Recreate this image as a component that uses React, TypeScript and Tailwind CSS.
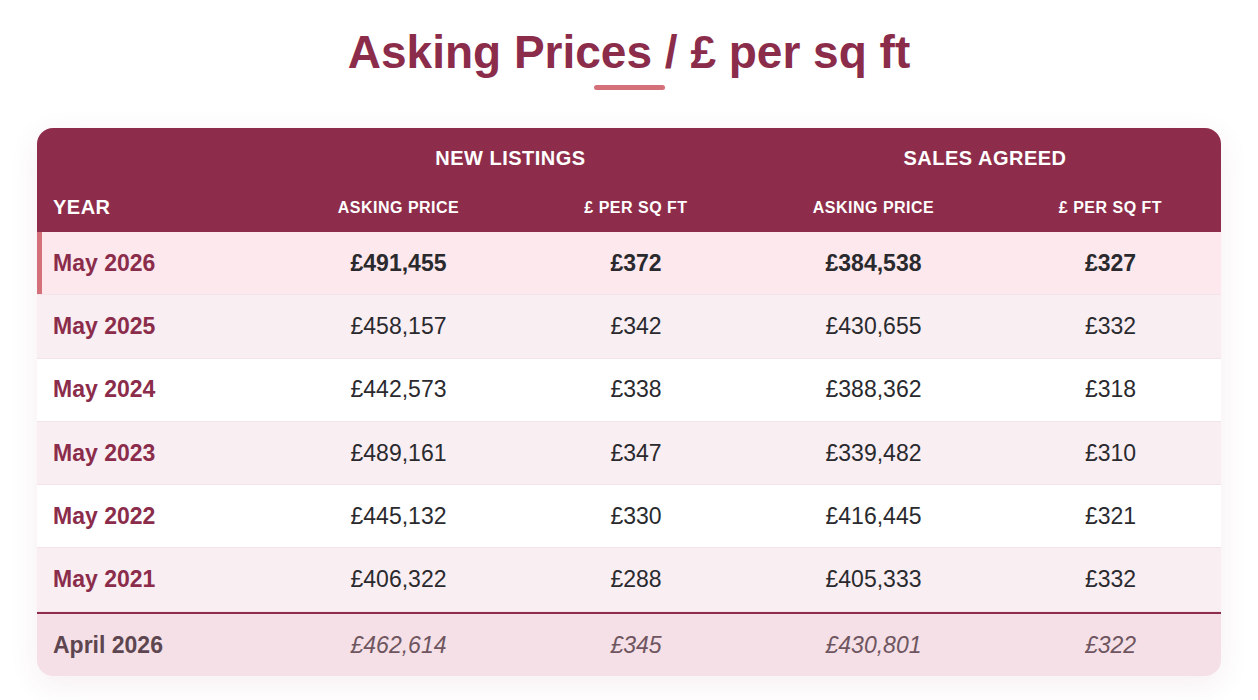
const rows = [
  { year: "May 2026", a: "£491,455", b: "£372", c: "£384,538", d: "£327", bg: "bg-[#fce8ed]", current: true },
  { year: "May 2025", a: "£458,157", b: "£342", c: "£430,655", d: "£332", bg: "bg-[#f9eef2]" },
  { year: "May 2024", a: "£442,573", b: "£338", c: "£388,362", d: "£318", bg: "bg-white" },
  { year: "May 2023", a: "£489,161", b: "£347", c: "£339,482", d: "£310", bg: "bg-[#f9eef2]" },
  { year: "May 2022", a: "£445,132", b: "£330", c: "£416,445", d: "£321", bg: "bg-white" },
  { year: "May 2021", a: "£406,322", b: "£288", c: "£405,333", d: "£332", bg: "bg-[#f9eef2]" },
];

const cols = "grid grid-cols-[243px_237px_238px_237px_1fr] items-center";

export default function App() {
  return (
    <div className="min-h-[700px] bg-white px-[37px] pt-[24px] font-['Liberation_Sans',Arial,sans-serif]">
      {/* Title */}
      <div className="flex flex-col items-center">
        <h1 className="text-[46px] font-bold leading-[56px] text-[#8b2c4b]">Asking Prices / £ per sq ft</h1>
        <div className="mt-[5px] h-[5px] w-[71px] rounded-full bg-[#d4707a]" />
      </div>

      {/* Table */}
      <div className="mt-[38px] overflow-hidden rounded-[16px] bg-white shadow-[0_8px_30px_rgba(139,44,75,0.08)]">
        {/* Header */}
        <div className="bg-[#8e2d4b] text-white">
          <div className={`${cols} h-[57px] pt-[3px]`}>
            <div />
            <div className="col-span-2 pr-[14px] text-center text-[20px] font-bold tracking-[0.5px]">NEW LISTINGS</div>
            <div className="col-span-2 pr-[6px] text-center text-[20px] font-bold tracking-[0.5px]">SALES AGREED</div>
          </div>
          <div className={`${cols} h-[47px] pb-[4px]`}>
            <div className="pl-[16px] text-[20px] font-bold tracking-[0.5px]">YEAR</div>
            <div className="pt-[3px] text-center text-[16px] font-bold tracking-[0.5px]">ASKING PRICE</div>
            <div className="pt-[3px] text-center text-[16px] font-bold tracking-[0.5px]">£ PER SQ FT</div>
            <div className="pt-[3px] text-center text-[16px] font-bold tracking-[0.5px]">ASKING PRICE</div>
            <div className="pl-[8px] pt-[3px] text-center text-[16px] font-bold tracking-[0.5px]">£ PER SQ FT</div>
          </div>
        </div>

        {/* Body */}
        {rows.map((r) => (
          <div
            key={r.year}
            className={`${cols} h-[63.3px] border-b border-[#f3e4e9] text-[23px] text-[#2a2a2e] ${r.bg} ${
              r.current ? "font-bold shadow-[inset_5px_0_0_#d4707a]" : ""
            }`}
          >
            <div className="pl-[16px] font-bold text-[#8b2c4b]">{r.year}</div>
            <div className="text-center">{r.a}</div>
            <div className="text-center">{r.b}</div>
            <div className="text-center">{r.c}</div>
            <div className="pl-[8px] text-center">{r.d}</div>
          </div>
        ))}

        {/* Previous month */}
        <div className={`${cols} h-[64px] border-t-2 border-[#8e2d4b] bg-[#f4e0e6] text-[23px] italic text-[#6e5560]`}>
          <div className="pl-[16px] font-bold not-italic text-[#5e4650]">April 2026</div>
          <div className="text-center">£462,614</div>
          <div className="text-center">£345</div>
          <div className="text-center">£430,801</div>
          <div className="pl-[8px] text-center">£322</div>
        </div>
      </div>
    </div>
  );
}
